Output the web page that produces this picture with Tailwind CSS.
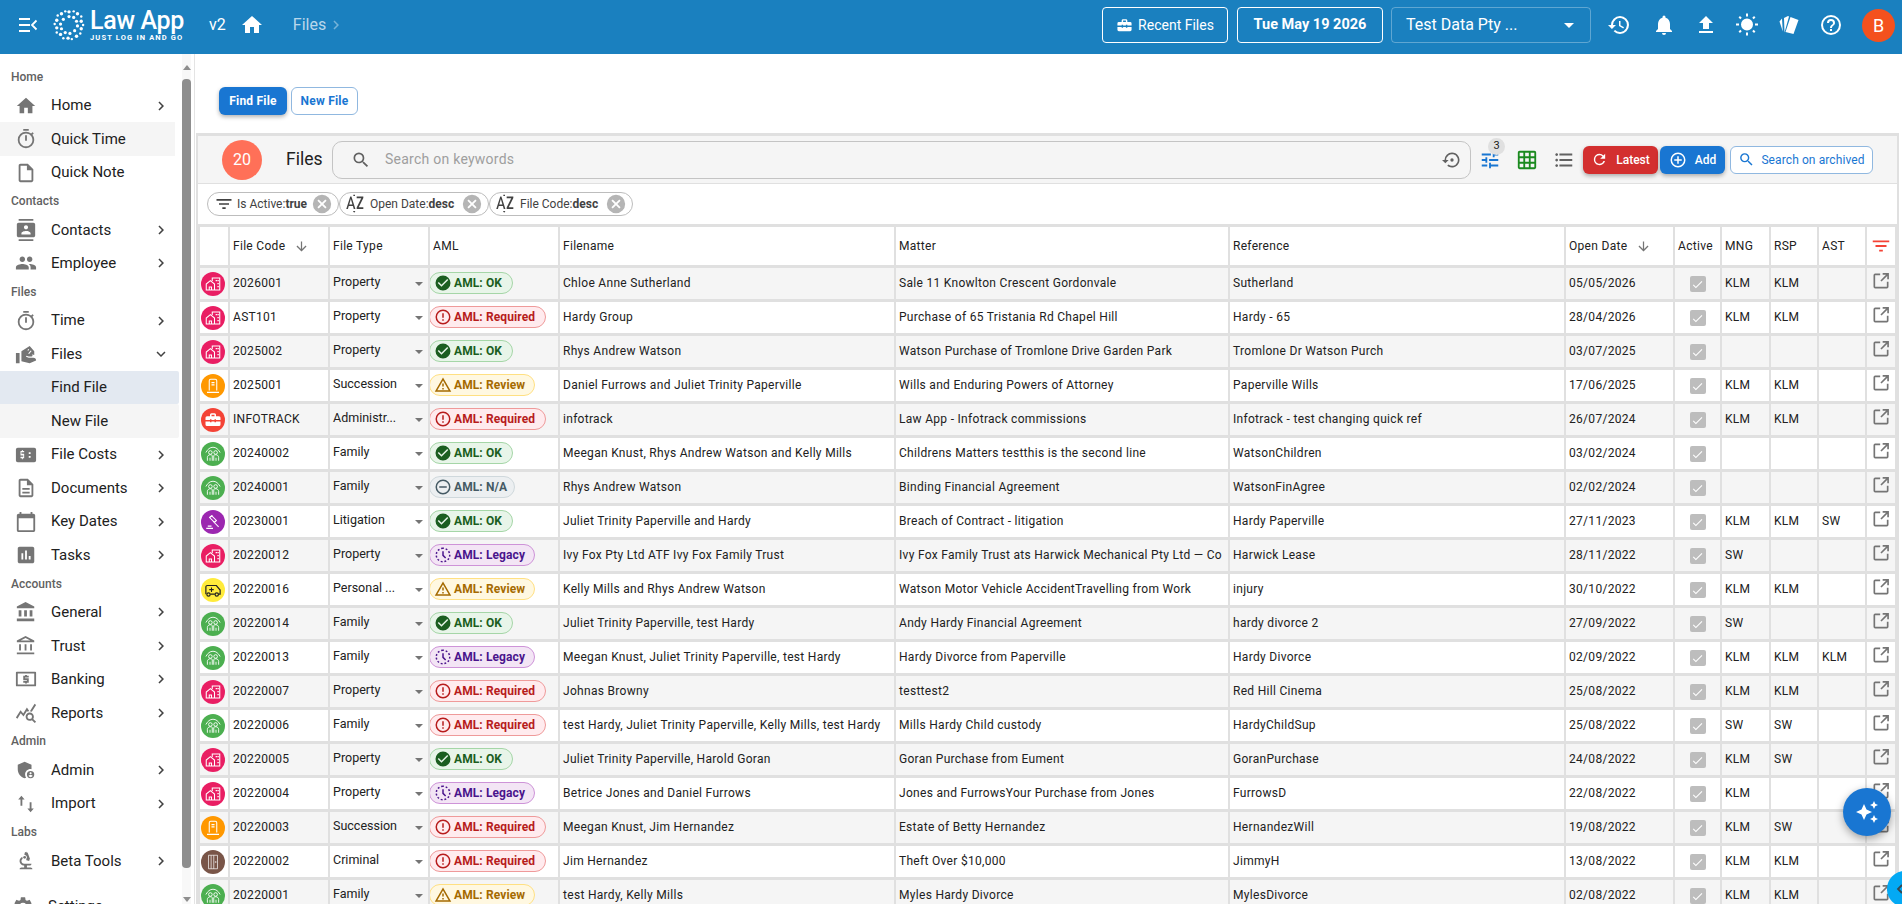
<!DOCTYPE html>
<html lang="en">
<head>
<meta charset="UTF-8" />
<title>Law App - Files</title>
<script src="https://cdn.jsdelivr.net/npm/@tailwindcss/browser@4"></script>
</head>
<body class="h-[904px] w-[1902px] overflow-hidden bg-white font-['Roboto',sans-serif] text-[#212121]">

<svg class="hidden">
  <symbol id="i-home" viewBox="0 0 24 24"><path fill="currentColor" d="M10 20v-6h4v6h5v-8h3L12 3 2 12h3v8z"/></symbol>
  <symbol id="i-timer" viewBox="0 0 24 24"><path fill="currentColor" d="M15 1H9v2h6V1zm-4 13h2V8h-2v6zm8.03-6.61 1.42-1.42c-.43-.51-.9-.99-1.41-1.41l-1.42 1.42A8.962 8.962 0 0 0 12 4a9 9 0 1 0 9 9c0-2.12-.74-4.07-1.97-5.61zM12 20c-3.87 0-7-3.13-7-7s3.13-7 7-7 7 3.13 7 7-3.13 7-7 7z"/></symbol>
  <symbol id="i-note" viewBox="0 0 24 24"><path fill="currentColor" d="M14 2H6c-1.1 0-2 .9-2 2v16c0 1.1.9 2 2 2h12c1.1 0 2-.9 2-2V8l-6-6zm4 18H6V4h7v5h5v11z"/></symbol>
  <symbol id="i-contacts" viewBox="0 0 24 24"><path fill="currentColor" d="M20 0H4v2h16V0zM4 24h16v-2H4v2zM20 4H4c-1.1 0-2 .9-2 2v12c0 1.1.9 2 2 2h16c1.1 0 2-.9 2-2V6c0-1.1-.9-2-2-2zm-8 2.75c1.24 0 2.25 1.01 2.25 2.25s-1.01 2.25-2.25 2.25S9.75 10.24 9.75 9 10.76 6.75 12 6.75zM17 17H7v-1.5c0-1.67 3.33-2.5 5-2.5s5 .83 5 2.5V17z"/></symbol>
  <symbol id="i-people" viewBox="0 0 24 24"><path fill="currentColor" d="M16 11c1.66 0 2.99-1.34 2.99-3S17.66 5 16 5s-3 1.34-3 3 1.34 3 3 3zm-8 0c1.66 0 2.99-1.34 2.99-3S9.66 5 8 5 5 6.34 5 8s1.34 3 3 3zm0 2c-2.33 0-7 1.17-7 3.5V19h14v-2.5C15 14.17 10.33 13 8 13zm8 0c-.29 0-.62.02-.97.05 1.16.84 1.97 1.97 1.97 3.45V19h6v-2.5c0-2.33-4.67-3.5-7-3.5z"/></symbol>
  <symbol id="i-files" viewBox="0 0 24 24"><path fill="currentColor" d="M1 11h4v11H1zM16 3.2 7 9v11l9 2 7-3c0-2-1-3-3-3h-5l-3-1 .5-1 2.5.8h3c1.5 0 1.5-2.2 0-2.6L21 13V9zm-1.500 3.300 1 .6-1 1.400-1-.6zm2.600 1.600 1 .6-2.700 3.400-1-.6z"/></symbol>
  <symbol id="i-costs" viewBox="0 0 24 24"><path fill="currentColor" fill-rule="evenodd" d="M3 4h18a2 2 0 0 1 2 2v12a2 2 0 0 1-2 2H3a2 2 0 0 1-2-2V6a2 2 0 0 1 2-2zm7 5V7.500H8.500V6.500h-1v1H6v5h3v1.500H6v1.500h1.500v1h1v-1H10v-5H7V9zm5 0h2v2h-2zm0 4h2v2h-2z"/></symbol>
  <symbol id="i-doc" viewBox="0 0 24 24"><path fill="currentColor" d="M14 2H6c-1.1 0-2 .9-2 2v16c0 1.1.9 2 2 2h12c1.1 0 2-.9 2-2V8l-6-6zm4 18H6V4h7v5h5v11zM8 12h8v2H8zm0 4h8v2H8z"/></symbol>
  <symbol id="i-cal" viewBox="0 0 24 24"><path fill="currentColor" d="M20 3h-1V1h-2v2H7V1H5v2H4c-1.1 0-2 .9-2 2v16c0 1.1.9 2 2 2h16c1.1 0 2-.9 2-2V5c0-1.1-.9-2-2-2zm0 18H4V8h16v13z"/></symbol>
  <symbol id="i-tasks" viewBox="0 0 24 24"><path fill="currentColor" d="M19 3H5c-1.1 0-2 .9-2 2v14c0 1.1.9 2 2 2h14c1.1 0 2-.9 2-2V5c0-1.1-.9-2-2-2zM9 17H7v-7h2v7zm4 0h-2V7h2v10zm4 0h-2v-4h2v4z"/></symbol>
  <symbol id="i-bank" viewBox="0 0 24 24"><path fill="currentColor" d="M4 10v7h3v-7H4zm6 0v7h3v-7h-3zM2 22h19v-3H2v3zm14-12v7h3v-7h-3zM11.500 1 2 6v2h19V6l-9.500-5z"/></symbol>
  <symbol id="i-bank2" viewBox="0 0 24 24"><path fill="currentColor" d="M6.500 10h-2v7h2v-7zm6 0h-2v7h2v-7zm8.500 9H2v2h19v-2zm-2.500-9h-2v7h2v-7zm-7-6.740L16.710 6H6.290l5.210-2.740M11.500 1 2 6v2h19V6l-9.500-5z"/></symbol>
  <symbol id="i-banking" viewBox="0 0 24 24"><path fill="currentColor" fill-rule="evenodd" d="M2 4h20a1 1 0 0 1 1 1v14a1 1 0 0 1-1 1H2a1 1 0 0 1-1-1V5a1 1 0 0 1 1-1zm1 2v12h18V6z"/><path fill="currentColor" d="M11 7.500h2v1h2v1.800h-4v.9h4V16h-2v1h-2v-1H9v-1.800h4v-.9H9V8.500h2z"/></symbol>
  <symbol id="i-reports" viewBox="0 0 24 24"><path fill="currentColor" d="M19.880 18.470c.44-.7.7-1.510.7-2.390 0-2.490-2.010-4.500-4.500-4.500s-4.500 2.010-4.500 4.500 2.010 4.500 4.490 4.500c.88 0 1.700-.26 2.390-.7L21.580 23 23 21.580l-3.120-3.110zm-3.790.11a2.500 2.500 0 0 1 0-5 2.500 2.500 0 0 1 0 5zm-.36-8.500c-.74.020-1.450.18-2.100.45l-.55-.83-3.800 6.180-3.010-3.520-3.630 5.810L1 17l5-8 3 3.500L13 6zm2.590.5c-.64-.28-1.330-.45-2.050-.49L21.380 2 23 3.180z"/></symbol>
  <symbol id="i-shield" viewBox="0 0 24 24"><path fill="currentColor" d="M17 11c.34 0 .67.040 1 .09V6.270L10.500 3 3 6.270v4.910c0 4.540 3.200 8.790 7.500 9.820.55-.13 1.080-.32 1.600-.55A5.973 5.973 0 0 1 11 17c0-3.310 2.690-6 6-6z"/><path fill="currentColor" fill-rule="evenodd" d="M17 13a4 4 0 1 0 0 8 4 4 0 0 0 0-8zm0 1.400c.62 0 1.120.51 1.120 1.120s-.5 1.120-1.120 1.120-1.120-.51-1.120-1.120.5-1.120 1.120-1.120zm0 5.400c-.93 0-1.740-.46-2.240-1.170.05-.72 1.510-1.080 2.240-1.080s2.190.36 2.240 1.080c-.5.710-1.310 1.170-2.240 1.170z"/></symbol>
  <symbol id="i-import" viewBox="0 0 24 24"><path fill="currentColor" d="M7 3 3.500 7H6v7h2V7h2.500zM16 10v7h-2.500l3.500 4 3.500-4H18v-7z"/></symbol>
  <symbol id="i-science" viewBox="0 0 24 24"><path fill="currentColor" d="M7 19c-1.1 0-2 .9-2 2h14c0-1.100-.9-2-2-2h-4v-2h3c1.100 0 2-.9 2-2h-8c-1.660 0-3-1.340-3-3 0-1.090.59-2.040 1.460-2.560C8.170 9.030 8 8.540 8 8c0-.21.040-.42.090-.62C6.280 8.130 5 9.920 5 12c0 2.760 2.240 5 5 5v2H7z"/><path fill="currentColor" d="M10.560 5.510C11.910 5.540 13 6.640 13 8c0 .75-.33 1.410-.85 1.870l.59 1.620.94-.34.34.94 1.880-.68-.34-.94.94-.34-2.740-7.520-.94.34-.34-.94-1.880.68.34.94-.94.35.56 1.530z"/><circle cx="10.500" cy="8" r="1.500" fill="currentColor"/></symbol>
  <symbol id="i-gear" viewBox="0 0 24 24"><path fill="currentColor" d="M19.140 12.940a7.140 7.140 0 0 0 0-1.880l2.030-1.580a.49.49 0 0 0 .12-.61l-1.920-3.320a.49.49 0 0 0-.59-.22l-2.390.96a7.030 7.030 0 0 0-1.620-.94l-.36-2.540a.48.48 0 0 0-.48-.41h-3.840a.47.47 0 0 0-.47.41l-.36 2.540c-.59.24-1.130.57-1.620.94l-2.390-.96a.49.49 0 0 0-.59.22L2.740 8.870a.48.48 0 0 0 .12.61l2.030 1.580a7.140 7.140 0 0 0 0 1.880l-2.030 1.580a.49.49 0 0 0-.12.61l1.920 3.320c.12.22.37.29.59.22l2.390-.96c.5.380 1.030.7 1.620.94l.36 2.540c.05.24.24.41.48.41h3.840c.24 0 .44-.17.47-.41l.36-2.540c.59-.24 1.130-.56 1.620-.94l2.390.96c.22.080.47 0 .59-.22l1.920-3.320a.48.48 0 0 0-.12-.61zM12 15.600a3.600 3.600 0 1 1 0-7.200 3.600 3.600 0 0 1 0 7.200z"/></symbol>
  <symbol id="i-chev" viewBox="0 0 24 24"><path fill="currentColor" d="M8.590 16.590 13.170 12 8.590 7.410 10 6l6 6-6 6z"/></symbol>
  <symbol id="i-chevdown" viewBox="0 0 24 24"><path fill="currentColor" d="M7.410 8.590 12 13.170l4.590-4.580L18 10l-6 6-6-6z"/></symbol>
  <symbol id="i-cancel" viewBox="0 0 24 24"><path fill="currentColor" d="M12 2a10 10 0 1 0 0 20 10 10 0 0 0 0-20zm5 13.590L15.590 17 12 13.410 8.410 17 7 15.590 10.590 12 7 8.410 8.410 7 12 10.590 15.590 7 17 8.410 13.410 12z"/></symbol>
  <symbol id="i-sortaz" viewBox="0 0 24 24"><path fill="currentColor" d="M6.300 3 1.500 18h2l1-3.500h5l1 3.500h2L7.700 3zm-1.200 9.500L7 6l1.900 6.500zM14 3h8v1.700L16.500 16H22v2h-8v-1.700L19.500 5H14zM9.500 20.500h3L11 22.500zM10 1h2v1.500h-2z"/></symbol>
  <symbol id="i-filter" viewBox="0 0 24 24"><path fill="currentColor" d="M10 18h4v-2h-4v2zM3 6v2h18V6H3zm3 7h12v-2H6v2z"/></symbol>
  <symbol id="i-ext" viewBox="0 0 24 24"><path fill="none" stroke="currentColor" stroke-width="2" d="M11 4H5a1 1 0 0 0-1 1v14a1 1 0 0 0 1 1h14a1 1 0 0 0 1-1v-6M12 12l8.500-8.500M14 3.500h6.500V10"/></symbol>
  <symbol id="a-ok" viewBox="0 0 24 24"><path fill="currentColor" d="M12 2a10 10 0 1 0 0 20 10 10 0 0 0 0-20zm-2 15-5-5 1.410-1.410L10 14.170l7.590-7.590L19 8l-9 9z"/></symbol>
  <symbol id="a-req" viewBox="0 0 24 24"><path fill="currentColor" d="M11 15h2v2h-2zm0-8h2v6h-2zm1-5a10 10 0 1 0 0 20 10 10 0 0 0 0-20zm0 18a8 8 0 1 1 0-16 8 8 0 0 1 0 16z"/></symbol>
  <symbol id="a-rev" viewBox="0 0 24 24"><path fill="currentColor" d="M12 5.990 19.530 19H4.470L12 5.990M12 2 1 21h22L12 2zm1 14h-2v2h2v-2zm0-6h-2v4h2v-4z"/></symbol>
  <symbol id="a-na" viewBox="0 0 24 24"><path fill="currentColor" d="M7 11v2h10v-2H7zm5-9a10 10 0 1 0 0 20 10 10 0 0 0 0-20zm0 18a8 8 0 1 1 0-16 8 8 0 0 1 0 16z"/></symbol>
  <symbol id="a-leg" viewBox="0 0 24 24"><path fill="none" stroke="currentColor" stroke-width="2" stroke-dasharray="2.500 2.500" d="M12 3a9 9 0 1 0 0 18 9 9 0 0 0 0-18z"/><path fill="none" stroke="currentColor" stroke-width="2" d="M12 7v5.500l3.500 3.500"/></symbol>
  <symbol id="t-prop" viewBox="0 0 24 24"><path fill="none" stroke="currentColor" stroke-width="1.400" d="M11 8V4h10v16H3v-8l5.500-4.500L14 12v8M7 20v-4h3v4"/><path fill="currentColor" d="M15.500 6.500h1.800v1.800h-1.800zm2.400 0h1.800v1.800h-1.800zm0 4h1.800v1.800h-1.800zm0 4h1.800v1.800h-1.800z"/></symbol>
  <symbol id="t-succ" viewBox="0 0 24 24"><path fill="none" stroke="currentColor" stroke-width="1.400" d="M7 18V5a2 2 0 0 1 2-2h6a2 2 0 0 1 2 2v13M4 20.500h16M10 7.500h4M10 10.500h4"/></symbol>
  <symbol id="t-admin" viewBox="0 0 24 24"><path fill="currentColor" d="M20 7h-4V5a2 2 0 0 0-2-2h-4a2 2 0 0 0-2 2v2H4a2 2 0 0 0-2 2v3h6v-1h2v1h4v-1h2v1h6V9a2 2 0 0 0-2-2zM10 5h4v2h-4zm6 10h-2v-1h-4v1H8v-1H2v4a2 2 0 0 0 2 2h16a2 2 0 0 0 2-2v-4h-6z"/></symbol>
  <symbol id="t-fam" viewBox="0 0 24 24"><g fill="none" stroke="currentColor" stroke-width="1.200"><path d="M2.500 10C5 5.500 8 3 12 3s7 2.500 9.500 7"/><circle cx="8.500" cy="10" r="2.400"/><circle cx="15.500" cy="10" r="2.400"/><path d="M4.500 21v-4.500c0-2 1.800-3.500 4-3.500 1 0 2 .3 2.500 1v7M13 21v-7c.5-.7 1.500-1 2.500-1 2.200 0 4 1.500 4 3.500V21M8 21v-4M16 21v-4"/></g></symbol>
  <symbol id="t-lit" viewBox="0 0 24 24"><g fill="none" stroke="currentColor" stroke-width="1.400"><path d="m10 3.500 6.500 6.500-2.500 2.500L7.500 6zM12 11l7.500 7.500M3 20.500h9M5 17.500h5"/><path d="m7.500 6 4-2.500M14 12.500 16.500 10"/></g></symbol>
  <symbol id="t-pi" viewBox="0 0 24 24"><path fill="none" stroke="currentColor" stroke-width="1.600" d="M2.500 17.500V8a2 2 0 0 1 2-2h12l5 6v5.500H19M8.500 17.500h6"/><circle cx="6" cy="18" r="2.200" fill="none" stroke="currentColor" stroke-width="1.600"/><circle cx="17" cy="18" r="2.200" fill="none" stroke="currentColor" stroke-width="1.600"/><path fill="currentColor" d="M9.300 8.500h1.400v2.300H13v1.400h-2.300v2.300H9.300v-2.300H7v-1.400h2.300z"/></symbol>
  <symbol id="t-crim" viewBox="0 0 24 24"><path fill="none" stroke="currentColor" stroke-width="1.300" d="M6 3h12v18H6zM9.500 3v18M13 3v18"/><path fill="currentColor" d="M14.500 11h2v2h-2z"/></symbol>
</svg>

<!-- top bar -->
<header class="flex h-[54px] items-center bg-[#1a80bf] pr-[7px] pb-[4px] pl-[18px] text-white">
  <svg class="h-[18px] w-[20px]" viewBox="0 0 20 16" fill="none" stroke="currentColor" stroke-width="1.800"><path d="M1 2h11M1 8h11M1 14h11M18.500 3.500 14 8l4.500 4.500"/></svg>
  <div class="ml-[15px] flex items-center">
    <svg class="h-[32px] w-[32px]" viewBox="0 0 34 34" fill="#fff">
      <circle cx="17" cy="3" r="1.800"/><circle cx="22" cy="2.500" r="1.300"/><circle cx="26" cy="5" r="1.800"/><circle cx="30" cy="8" r="1.300"/><circle cx="30" cy="13" r="1.800"/><circle cx="32" cy="17" r="1.300"/><circle cx="30" cy="21" r="1.800"/><circle cx="29" cy="26" r="1.300"/><circle cx="25" cy="29" r="1.800"/><circle cx="20" cy="32" r="1.300"/><circle cx="16" cy="31" r="1.800"/><circle cx="11" cy="31" r="1.300"/><circle cx="8" cy="27" r="1.800"/><circle cx="4" cy="25" r="1.300"/><circle cx="4" cy="20" r="1.800"/><circle cx="1.800" cy="16" r="1.300"/><circle cx="4" cy="12" r="1.800"/><circle cx="5" cy="7" r="1.300"/><circle cx="9" cy="5" r="1.800"/><circle cx="13" cy="2.500" r="1.300"/>
      <circle cx="17" cy="8" r="1.700"/><circle cx="22" cy="9" r="1.700"/><circle cx="25" cy="13" r="1.700"/><circle cx="26" cy="18" r="1.700"/><circle cx="23" cy="23" r="1.700"/><circle cx="18" cy="26" r="1.700"/><circle cx="13" cy="25" r="1.700"/><circle cx="9" cy="21" r="1.700"/><circle cx="8" cy="16" r="1.700"/><circle cx="11" cy="11" r="1.700"/>
    </svg>
    <div class="ml-[5px] flex flex-col leading-none">
      <span class="text-[25px] leading-[25px] font-medium tracking-[-0.3px]">Law App</span>
      <span class="text-[7.500px] leading-[9px] font-bold tracking-[1.15px]">JUST LOG IN AND GO</span>
    </div>
  </div>
  <span class="ml-[25px] text-[16px]">v2</span>
  <svg class="ml-[14px] h-[24px] w-[24px]"><use href="#i-home"/></svg>
  <span class="ml-[29px] text-[16px] text-white/70">Files</span>
  <svg class="ml-[1px] h-[18px] w-[18px] text-white/40"><use href="#i-chev"/></svg>

  <div class="ml-auto flex items-center">
    <button class="flex h-[36px] w-[126px] items-center justify-center gap-[5px] rounded-[4px] border border-white text-[14px]">
      <svg class="h-[17px] w-[17px]"><use href="#t-admin"/></svg>Recent Files
    </button>
    <button class="ml-[9px] h-[36px] w-[146px] rounded-[4px] border border-white text-[14.500px] font-bold">Tue May 19 2026</button>
    <div class="ml-[8px] flex h-[36px] w-[200px] items-center justify-between rounded-[4px] border border-white/30 pr-[16px] pl-[14px] text-[16px]">
      <span>Test Data Pty ...</span>
      <span class="h-0 w-0 border-x-[5px] border-t-[5px] border-x-transparent border-t-white"></span>
    </div>
    <div class="ml-[16px] flex items-center">
      <svg class="h-[24px] w-[24px]" viewBox="0 0 24 24"><path fill="currentColor" d="M13 3a9 9 0 0 0-9 9H1l3.890 3.890.07.140L9 12H6a7 7 0 1 1 2.050 4.950l-1.420 1.420A8.960 8.960 0 0 0 13 21a9 9 0 0 0 0-18zm-1 5v5l4.280 2.540.72-1.210-3.500-2.080V8z"/></svg>
      <svg class="ml-[21px] h-[24px] w-[24px]" viewBox="0 0 24 24"><path fill="currentColor" d="M12 22a2 2 0 0 0 2-2h-4a2 2 0 0 0 2 2zm6-6v-5c0-3.070-1.640-5.640-4.500-6.320V4a1.500 1.500 0 0 0-3 0v.68C7.630 5.360 6 7.920 6 11v5l-2 2v1h16v-1z"/></svg>
      <svg class="ml-[18px] h-[24px] w-[24px]" viewBox="0 0 24 24"><path fill="currentColor" d="M5 20h14v-2H5v2zm0-10h4v6h6v-6h4l-7-7-7 7z"/></svg>
      <svg class="ml-[17px] h-[24px] w-[24px]" viewBox="0 0 24 24"><path fill="currentColor" d="m6.760 4.840-1.800-1.790-1.410 1.410 1.790 1.790zM1 10.500h3v2H1zM11 .55h2V3.500h-2zm8.040 2.495 1.408 1.407-1.790 1.790-1.407-1.408zm-1.800 15.115 1.790 1.800 1.410-1.410-1.800-1.790zM20 10.500h3v2h-3zm-8-5a6 6 0 1 0 0 12 6 6 0 0 0 0-12zm-1 16.950h2V19.500h-2zm-7.450-3.910 1.410 1.410 1.790-1.800-1.410-1.410z"/></svg>
      <svg class="ml-[18px] h-[24px] w-[24px]" viewBox="0 0 24 24"><path fill="currentColor" d="M2.500 8.500 5 5.500l.8 13zM7 5l4-2 1 .5-4.500 16zM13.500 4l8 3-5 14-8-2z"/></svg>
      <svg class="ml-[18px] h-[24px] w-[24px]" viewBox="0 0 24 24"><path fill="currentColor" d="M11 18h2v-2h-2v2zm1-16a10 10 0 1 0 0 20 10 10 0 0 0 0-20zm0 18a8 8 0 1 1 0-16 8 8 0 0 1 0 16zm0-14a4 4 0 0 0-4 4h2a2 2 0 1 1 4 0c0 2-3 1.750-3 5h2c0-2.250 3-2.500 3-5a4 4 0 0 0-4-4z"/></svg>
      <span class="ml-[19px] flex h-[33px] w-[33px] items-center justify-center rounded-full bg-[#f4511e] text-[18px]">B</span>
    </div>
  </div>
</header>

<div class="flex h-[850px]">
  <!-- sidebar -->
  <aside class="relative h-full w-[195px] shrink-0 overflow-hidden border-r border-[#e4e4e4]">
    <nav id="side" class="w-[182px] pt-[11px]"></nav>
    <div class="absolute top-0 right-[3px] bottom-0 flex w-[9px] flex-col items-center bg-[#f8f8f8]">
      <span class="mt-[11px] h-0 w-0 border-x-[4px] border-b-[5px] border-x-transparent border-b-[#8e8e8e]"></span>
      <span class="mt-[9px] h-[789px] w-[9px] rounded-[4px] bg-[#8e8e8e]"></span>
      <span class="mt-auto mb-[2px] h-0 w-0 border-x-[4px] border-t-[5px] border-x-transparent border-t-[#8e8e8e]"></span>
    </div>
  </aside>

  <!-- main -->
  <main class="min-w-0 flex-1 pr-[3px] pl-[1px]">
    <div class="flex h-[79px] items-start gap-[4px] pt-[33px] pl-[23px]">
      <button class="h-[28px] w-[68px] rounded-[6px] bg-[#1976d2] text-[12px] font-bold tracking-[0.2px] text-white shadow-[0_2px_4px_rgba(0,0,0,0.3)]">Find File</button>
      <button class="h-[28px] w-[67px] rounded-[6px] border border-[#90b8e0] text-[12px] font-bold tracking-[0.2px] text-[#1976d2]">New File</button>
    </div>

    <section class="border-x-[2px] border-t-[3px] border-[#e0e0e0]">
      <div class="flex h-[48px] items-center border-b border-[#e0e0e0] bg-[#f5f5f5]">
        <span class="ml-[24px] flex h-[40px] w-[40px] items-center justify-center rounded-full bg-[#ff7058] text-[16px] text-white">20</span>
        <span class="ml-[24px] w-[46px] text-[17.500px]">Files</span>
        <div class="flex h-[38px] w-[1139px] items-center rounded-[10px] border border-[#c4c4c4] pr-[8px] pl-[18px]">
          <svg class="h-[20px] w-[20px] text-[#616161]" viewBox="0 0 24 24"><path fill="currentColor" d="M15.500 14h-.79l-.28-.27A6.470 6.470 0 0 0 16 9.500 6.500 6.500 0 1 0 9.500 16c1.610 0 3.090-.59 4.230-1.570l.27.28v.79l5 4.990L20.490 19l-4.990-5zm-6 0C7.010 14 5 11.990 5 9.500S7.010 5 9.500 5 14 7.010 14 9.500 11.990 14 9.500 14z"/></svg>
          <span class="ml-[14px] text-[14px] tracking-[0.25px] text-[#9e9e9e]">Search on keywords</span>
          <svg class="ml-auto h-[20px] w-[20px] text-[#616161]" viewBox="0 0 24 24"><path fill="currentColor" d="M14 12a2 2 0 1 0-2 2 2 2 0 0 0 2-2zm-2-9a9 9 0 0 0-9 9H0l4 4 4-4H5a7 7 0 1 1 2.700 5.500l-1.400 1.500A9 9 0 1 0 12 3z"/></svg>
        </div>
        <div class="relative ml-[8px] h-[22px] w-[22px] text-[#1976d2]">
          <svg class="h-[22px] w-[22px]" viewBox="0 0 24 24"><path fill="currentColor" d="M3 17v2h6v-2H3zM3 5v2h10V5H3zm10 16v-2h8v-2h-8v-2h-2v6h2zM7 9v2H3v2h4v2h2V9H7zm14 4v-2H11v2h10zm-6-4h2V7h4V5h-4V3h-2v6z"/></svg>
          <span class="absolute -top-[11px] left-[9px] flex h-[17px] w-[17px] items-center justify-center rounded-full bg-[#e0e0e0] text-[11px] text-[#212121]">3</span>
        </div>
        <svg class="ml-[15px] h-[22px] w-[22px] text-[#1b8a1f]" viewBox="0 0 24 24"><path fill="currentColor" d="M20 2H4c-1.100 0-2 .9-2 2v16c0 1.100.9 2 2 2h16c1.100 0 2-.9 2-2V4c0-1.100-.9-2-2-2zM8 20H4v-4h4v4zm0-6H4v-4h4v4zm0-6H4V4h4v4zm6 12h-4v-4h4v4zm0-6h-4v-4h4v4zm0-6h-4V4h4v4zm6 12h-4v-4h4v4zm0-6h-4v-4h4v4zm0-6h-4V4h4v4z"/></svg>
        <svg class="ml-[15px] h-[22px] w-[22px] text-[#616161]" viewBox="0 0 24 24"><path fill="currentColor" d="M4 10.500c-.83 0-1.500.67-1.500 1.500s.67 1.500 1.500 1.500 1.500-.67 1.500-1.500-.67-1.500-1.500-1.500zm0-6c-.83 0-1.500.67-1.500 1.500S3.170 7.500 4 7.500 5.500 6.830 5.500 6 4.830 4.500 4 4.500zm0 12c-.83 0-1.500.68-1.500 1.500s.68 1.500 1.500 1.500 1.500-.68 1.500-1.500-.67-1.500-1.500-1.500zM7 19h14v-2H7v2zm0-6h14v-2H7v2zm0-8v2h14V5H7z"/></svg>
        <button class="ml-[8px] flex h-[28px] w-[75px] items-center justify-center gap-[8px] rounded-[6px] bg-[#d32f2f] text-[12px] font-medium text-white shadow-[0_2px_4px_rgba(0,0,0,0.3)]">
          <svg class="h-[17px] w-[17px]" viewBox="0 0 24 24"><path fill="currentColor" d="M17.650 6.350A7.960 7.960 0 0 0 12 4a8 8 0 1 0 7.730 10h-2.080A6 6 0 1 1 12 6c1.660 0 3.140.69 4.220 1.780L13 11h7V4l-2.350 2.350z"/></svg>Latest
        </button>
        <button class="ml-[2px] flex h-[28px] w-[65px] items-center justify-center gap-[8px] rounded-[6px] bg-[#1976d2] text-[12px] font-medium text-white shadow-[0_2px_4px_rgba(0,0,0,0.3)]">
          <svg class="h-[18px] w-[18px]" viewBox="0 0 24 24"><path fill="currentColor" d="M13 7h-2v4H7v2h4v4h2v-4h4v-2h-4V7zm-1-5a10 10 0 1 0 0 20 10 10 0 0 0 0-20zm0 18a8 8 0 1 1 0-16 8 8 0 0 1 0 16z"/></svg>Add
        </button>
        <button class="ml-[5px] flex h-[28px] w-[143px] items-center justify-center gap-[6px] rounded-[6px] border border-[#90b8e0] bg-white text-[12px] text-[#1976d2]">
          <svg class="h-[17px] w-[17px]" viewBox="0 0 24 24"><path fill="currentColor" d="M15.500 14h-.79l-.28-.27A6.470 6.470 0 0 0 16 9.500 6.500 6.500 0 1 0 9.500 16c1.610 0 3.090-.59 4.230-1.570l.27.28v.79l5 4.990L20.490 19l-4.990-5zm-6 0C7.010 14 5 11.990 5 9.500S7.010 5 9.500 5 14 7.010 14 9.500 11.990 14 9.500 14z"/></svg><span class="tracking-[0.1px]">Search on archived</span>
        </button>
      </div>
      <div class="flex h-[40px] items-center pl-[9px]">
        <span class="flex h-[24px] w-[132px] items-center rounded-full border border-[#bdbdbd] pr-[5px] pl-[6px] text-[12px] text-[#424242]">
          <svg class="h-[20px] w-[20px]"><use href="#i-filter"/></svg><span class="ml-[3px]">Is Active:<b class="font-bold">true</b></span>
          <svg class="ml-auto h-[22px] w-[22px] text-[#b5b5b5]"><use href="#i-cancel"/></svg>
        </span>
        <span class="flex h-[24px] w-[150px] items-center rounded-full border border-[#bdbdbd] pr-[5px] pl-[5px] text-[12px] text-[#424242]">
          <svg class="h-[20px] w-[20px]"><use href="#i-sortaz"/></svg><span class="ml-[5px]">Open Date:<b class="font-bold">desc</b></span>
          <svg class="ml-auto h-[22px] w-[22px] text-[#b5b5b5]"><use href="#i-cancel"/></svg>
        </span>
        <span class="flex h-[24px] w-[144px] items-center rounded-full border border-[#bdbdbd] pr-[5px] pl-[5px] text-[12px] text-[#424242]">
          <svg class="h-[20px] w-[20px]"><use href="#i-sortaz"/></svg><span class="ml-[5px]">File Code:<b class="font-bold">desc</b></span>
          <svg class="ml-auto h-[22px] w-[22px] text-[#b5b5b5]"><use href="#i-cancel"/></svg>
        </span>
      </div>

      <table class="w-full table-fixed border-collapse text-[12px] tracking-[0.3px]">
        <colgroup>
          <col class="w-[30px]"/><col class="w-[100px]"/><col class="w-[100px]"/><col class="w-[130px]"/><col class="w-[336px]"/><col class="w-[334px]"/><col class="w-[336px]"/><col class="w-[109px]"/><col class="w-[47px]"/><col class="w-[49px]"/><col class="w-[48px]"/><col class="w-[48px]"/><col/>
        </colgroup>
        <thead>
          <tr class="h-[41px] [&>th]:border-x-[2px] [&>th]:border-y-[3px] [&>th]:border-[#e0e0e0] [&>th]:px-[3px] [&>th]:text-left [&>th]:font-normal">
            <th class="border-l-0"></th>
            <th><span class="flex items-center gap-[9px]">File Code<svg class="h-[15px] w-[15px] text-[#757575]" viewBox="0 0 24 24"><path fill="currentColor" d="m20 12-1.410-1.410L13 16.170V4h-2v12.170l-5.580-5.590L4 12l8 8 8-8z"/></svg></span></th>
            <th>File Type</th>
            <th>AML</th>
            <th>Filename</th>
            <th>Matter</th>
            <th>Reference</th>
            <th><span class="flex items-center gap-[9px]">Open Date<svg class="h-[15px] w-[15px] text-[#757575]" viewBox="0 0 24 24"><path fill="currentColor" d="m20 12-1.410-1.410L13 16.170V4h-2v12.170l-5.580-5.590L4 12l8 8 8-8z"/></svg></span></th>
            <th class="!pr-0 text-center">Active</th>
            <th>MNG</th>
            <th>RSP</th>
            <th>AST</th>
            <th class="border-r-0"><svg class="mx-auto h-[22px] w-[22px] text-[#f44336]"><use href="#i-filter"/></svg></th>
          </tr>
        </thead>
        <tbody id="rows"></tbody>
      </table>
    </section>
  </main>
</div>

<!-- floating buttons -->
<button class="absolute top-[788px] left-[1843px] flex h-[48px] w-[48px] items-center justify-center rounded-full bg-[#1976d2] text-white shadow-[0_3px_8px_rgba(0,0,0,0.35)]">
  <svg class="h-[24px] w-[24px]" viewBox="0 0 24 24"><path fill="currentColor" d="m19 9 1.250-2.750L23 5l-2.750-1.250L19 1l-1.250 2.750L15 5l2.750 1.250zm-7.500.5L9 4 6.500 9.500 1 12l5.500 2.500L9 20l2.500-5.500L17 12zM19 15l-1.250 2.750L15 19l2.750 1.250L19 23l1.250-2.750L23 19l-2.750-1.250z"/></svg>
</button>
<span class="absolute top-[871px] left-[1887px] flex h-[36px] w-[36px] items-center rounded-full bg-[#03a9f4] pl-[9px] text-[#37474f]">
  <svg class="h-[10px] w-[8px]" viewBox="0 0 8 10" fill="none" stroke="currentColor" stroke-width="1.800"><path d="M6 1 2 5l4 4"/></svg>
</span>

<script>
  const side = [
    ['l', 'Home'],
    ['i', 'Home', 'i-home'], ['n', 'Quick Time', 'i-timer', 'bg-[#f5f5f5] w-[175px]'], ['n', 'Quick Note', 'i-note'],
    ['l', 'Contacts'],
    ['i', 'Contacts', 'i-contacts'], ['i', 'Employee', 'i-people'],
    ['l', 'Files'],
    ['i', 'Time', 'i-timer'], ['o', 'Files', 'i-files'],
    ['s', 'Find File', '', 'bg-[#e3e9f1]'], ['s', 'New File', '', 'bg-[#f5f5f5]'],
    ['i', 'File Costs', 'i-costs'], ['i', 'Documents', 'i-doc'], ['i', 'Key Dates', 'i-cal'], ['i', 'Tasks', 'i-tasks'],
    ['l', 'Accounts'],
    ['i', 'General', 'i-bank'], ['i', 'Trust', 'i-bank2'], ['i', 'Banking', 'i-banking'], ['i', 'Reports', 'i-reports'],
    ['l', 'Admin'],
    ['i', 'Admin', 'i-shield'], ['i', 'Import', 'i-import'],
    ['l', 'Labs'],
    ['i', 'Beta Tools', 'i-science'],
    ['g', 'Settings', 'i-gear']
  ];

  document.getElementById('side').innerHTML = side.map(([kind, text, icon, bg]) => {
    if (kind === 'l') return `<div class="flex h-[23.75px] items-center pl-[11px] text-[12px] font-medium text-[#616161]">${text}</div>`;
    if (kind === 's') return `<div class="flex h-[33.5px] w-[179px] items-center rounded-r-[2px] pl-[51px] text-[15px] ${bg}">${text}</div>`;
    const arrow = kind === 'n' || kind === 'g' ? '' : `<svg class="absolute left-[152px] h-[18px] w-[18px] text-[#424242]"><use href="#${kind === 'o' ? 'i-chevdown' : 'i-chev'}"/></svg>`;
    const shift = kind === 'g' ? 'mt-[12px] -ml-[3px]' : '';
    return `<div class="relative flex h-[33.5px] items-center text-[15px] ${bg || ''} ${shift}">
      <svg class="ml-[15px] h-[22px] w-[22px] shrink-0 text-[#757575]"><use href="#${icon}"/></svg>
      <span class="ml-[14px]">${text}</span>${arrow}</div>`;
  }).join('');

  const typeIcon = {
    Property: ['t-prop', 'bg-[#e91e63] text-white'],
    Succession: ['t-succ', 'bg-[#ff9800] text-white'],
    Admin: ['t-admin', 'bg-[#f44336] text-white'],
    Family: ['t-fam', 'bg-[#4caf50] text-white'],
    Litigation: ['t-lit', 'bg-[#9c27b0] text-white'],
    Personal: ['t-pi', 'bg-[#ffeb3b] text-[#212121]'],
    Criminal: ['t-crim', 'bg-[#795548] text-white/70']
  };

  const aml = {
    OK: ['a-ok', 'AML: OK', 'w-[84px] border-[#a5d6a7] bg-[#e8f5e9] text-[#1b5e20]'],
    Required: ['a-req', 'AML: Required', 'w-[117px] border-[#ef9a9a] bg-[#ffebee] text-[#b71c1c]'],
    Review: ['a-rev', 'AML: Review', 'w-[106px] border-[#ffe082] bg-[#fff8e1] text-[#a56a00]'],
    'N/A': ['a-na', 'AML: N/A', 'w-[86px] border-[#cfd8dc] bg-[#eceff1] text-[#455a64]'],
    Legacy: ['a-leg', 'AML: Legacy', 'w-[106px] border-[#ce93d8] bg-[#f3e5f5] text-[#4a148c]']
  };

  const files = [
    ['Property', '2026001', 'Property', 'OK', 'Chloe Anne Sutherland', 'Sale 11 Knowlton Crescent Gordonvale', 'Sutherland', '05/05/2026', 'KLM', 'KLM', ''],
    ['Property', 'AST101', 'Property', 'Required', 'Hardy Group', 'Purchase of 65 Tristania Rd Chapel Hill', 'Hardy - 65', '28/04/2026', 'KLM', 'KLM', ''],
    ['Property', '2025002', 'Property', 'OK', 'Rhys Andrew Watson', 'Watson Purchase of Tromlone Drive Garden Park', 'Tromlone Dr Watson Purch', '03/07/2025', '', '', ''],
    ['Succession', '2025001', 'Succession', 'Review', 'Daniel Furrows and Juliet Trinity Paperville', 'Wills and Enduring Powers of Attorney', 'Paperville Wills', '17/06/2025', 'KLM', 'KLM', ''],
    ['Admin', 'INFOTRACK', 'Administr...', 'Required', 'infotrack', 'Law App - Infotrack commissions', 'Infotrack - test changing quick ref', '26/07/2024', 'KLM', 'KLM', ''],
    ['Family', '20240002', 'Family', 'OK', 'Meegan Knust, Rhys Andrew Watson and Kelly Mills', 'Childrens Matters testthis is the second line', 'WatsonChildren', '03/02/2024', '', '', ''],
    ['Family', '20240001', 'Family', 'N/A', 'Rhys Andrew Watson', 'Binding Financial Agreement', 'WatsonFinAgree', '02/02/2024', '', '', ''],
    ['Litigation', '20230001', 'Litigation', 'OK', 'Juliet Trinity Paperville and Hardy', 'Breach of Contract - litigation', 'Hardy Paperville', '27/11/2023', 'KLM', 'KLM', 'SW'],
    ['Property', '20220012', 'Property', 'Legacy', 'Ivy Fox Pty Ltd ATF Ivy Fox Family Trust', 'Ivy Fox Family Trust ats Harwick Mechanical Pty Ltd — Co', 'Harwick Lease', '28/11/2022', 'SW', '', ''],
    ['Personal', '20220016', 'Personal ...', 'Review', 'Kelly Mills and Rhys Andrew Watson', 'Watson Motor Vehicle AccidentTravelling from Work', 'injury', '30/10/2022', 'KLM', 'KLM', ''],
    ['Family', '20220014', 'Family', 'OK', 'Juliet Trinity Paperville, test Hardy', 'Andy Hardy Financial Agreement', 'hardy divorce 2', '27/09/2022', 'SW', '', ''],
    ['Family', '20220013', 'Family', 'Legacy', 'Meegan Knust, Juliet Trinity Paperville, test Hardy', 'Hardy Divorce from Paperville', 'Hardy Divorce', '02/09/2022', 'KLM', 'KLM', 'KLM'],
    ['Property', '20220007', 'Property', 'Required', 'Johnas Browny', 'testtest2', 'Red Hill Cinema', '25/08/2022', 'KLM', 'KLM', ''],
    ['Family', '20220006', 'Family', 'Required', 'test Hardy, Juliet Trinity Paperville, Kelly Mills, test Hardy', 'Mills Hardy Child custody', 'HardyChildSup', '25/08/2022', 'SW', 'SW', ''],
    ['Property', '20220005', 'Property', 'OK', 'Juliet Trinity Paperville, Harold Goran', 'Goran Purchase from Eument', 'GoranPurchase', '24/08/2022', 'KLM', 'SW', ''],
    ['Property', '20220004', 'Property', 'Legacy', 'Betrice Jones and Daniel Furrows', 'Jones and FurrowsYour Purchase from Jones', 'FurrowsD', '22/08/2022', 'KLM', '', ''],
    ['Succession', '20220003', 'Succession', 'Required', 'Meegan Knust, Jim Hernandez', 'Estate of Betty Hernandez', 'HernandezWill', '19/08/2022', 'KLM', 'SW', ''],
    ['Criminal', '20220002', 'Criminal', 'Required', 'Jim Hernandez', 'Theft Over $10,000', 'JimmyH', '13/08/2022', 'KLM', 'KLM', ''],
    ['Family', '20220001', 'Family', 'Review', 'test Hardy, Kelly Mills', 'Myles Hardy Divorce', 'MylesDivorce', '02/08/2022', 'KLM', 'KLM', '']
  ];

  document.getElementById('rows').innerHTML = files.map((f, i) => {
    const [kind, code, type, status, filename, matter, ref, opened, mng, rsp, ast] = f;
    const [tIcon, tClass] = typeIcon[kind];
    const [aIcon, aText, aClass] = aml[status];
    const tone = i % 2 === 0 ? 'bg-[#f5f5f5]' : 'bg-white';
    return `<tr class="h-[34px] ${tone} [&>td]:border-x-[2px] [&>td]:border-y-[3px] [&>td]:border-[#e0e0e0] [&>td]:px-[3px] [&>td]:whitespace-nowrap">
      <td class="border-l-0 !px-0"><span class="ml-[1px] flex h-[24px] w-[24px] items-center justify-center rounded-full ${tClass}"><svg class="h-[18px] w-[18px]"><use href="#${tIcon}"/></svg></span></td>
      <td class="pb-[1px]">${code}</td>
      <td><span class="flex items-center justify-between pb-[3px] tracking-normal"><span class="text-[12.5px]">${type}</span><span class="mt-[4px] mr-[2px] h-0 w-0 border-x-[4px] border-t-[4px] border-x-transparent border-t-[#757575]"></span></span></td>
      <td class="!px-0"><span class="mb-[2px] -ml-[1px] flex h-[22px] items-center rounded-full border pl-[4px] text-[12px] font-bold tracking-[0.1px] ${aClass}"><svg class="h-[18px] w-[18px] shrink-0"><use href="#${aIcon}"/></svg><span class="ml-[2px]">${aText}</span></span></td>
      <td class="overflow-hidden pb-[1px]">${filename}</td>
      <td class="overflow-hidden pb-[1px]">${matter}</td>
      <td class="overflow-hidden pb-[1px]">${ref}</td>
      <td class="pb-[1px]">${opened}</td>
      <td class="text-center"><span class="inline-flex h-[16px] w-[16px] items-center justify-center rounded-[2px] bg-[#bdbdbd] align-middle"><svg class="h-[13px] w-[13px] text-white" viewBox="0 0 24 24"><path fill="currentColor" d="M9 16.170 4.830 12l-1.420 1.410L9 19 21 7l-1.410-1.410z"/></svg></span></td>
      <td class="pb-[1px]">${mng}</td><td class="pb-[1px]">${rsp}</td><td class="pb-[1px]">${ast}</td>
      <td class="border-r-0 !px-0 text-center"><svg class="mx-auto h-[20px] w-[20px] -translate-y-[3px] text-[#757575]"><use href="#i-ext"/></svg></td>
    </tr>`;
  }).join('');
</script>
</body>
</html>
